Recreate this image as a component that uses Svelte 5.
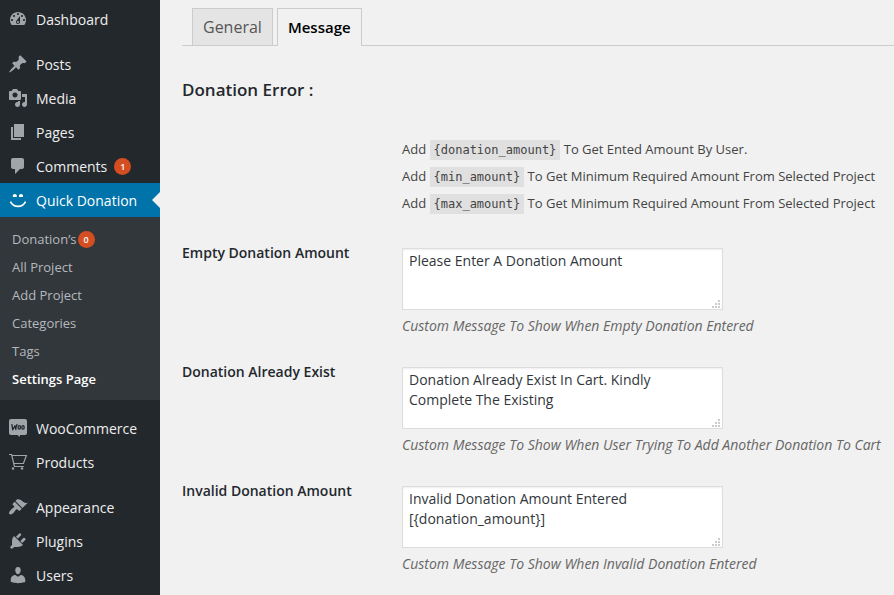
<script>
  const groups = [
    [{ name: 'Dashboard', icon: 'dashboard' }],
    [
      { name: 'Posts', icon: 'posts' },
      { name: 'Media', icon: 'media' },
      { name: 'Pages', icon: 'pages' },
      { name: 'Comments', icon: 'comments', count: 1 },
      {
        name: 'Quick Donation',
        icon: 'smiley',
        current: true,
        children: [
          { name: 'Donation’s', count: 0 },
          { name: 'All Project' },
          { name: 'Add Project' },
          { name: 'Categories' },
          { name: 'Tags' },
          { name: 'Settings Page', current: true }
        ]
      }
    ],
    [
      { name: 'WooCommerce', icon: 'woo' },
      { name: 'Products', icon: 'cart' }
    ],
    [
      { name: 'Appearance', icon: 'appearance' },
      { name: 'Plugins', icon: 'plugins' },
      { name: 'Users', icon: 'users' }
    ]
  ];

  const paths = {
    dashboard:
      'M3.76 16h12.48c1.1-1.37 1.76-3.11 1.76-5 0-4.42-3.58-8-8-8s-8 3.58-8 8c0 1.89.66 3.63 1.76 5zM10 4c.55 0 1 .45 1 1s-.45 1-1 1-1-.45-1-1 .45-1 1-1zM6 6c.55 0 1 .45 1 1s-.45 1-1 1-1-.45-1-1 .45-1 1-1zm8 0c.55 0 1 .45 1 1s-.45 1-1 1-1-.45-1-1 .45-1 1-1zm-5.37 5.55L12 7v6c0 1.1-.9 2-2 2s-2-.9-2-2c0-.57.24-1.08.63-1.45zM4 10c.55 0 1 .45 1 1s-.45 1-1 1-1-.45-1-1 .45-1 1-1zm12 0c.55 0 1 .45 1 1s-.45 1-1 1-1-.45-1-1 .45-1 1-1zm-5 3c0-.55-.45-1-1-1s-1 .45-1 1 .45 1 1 1 1-.45 1-1z',
    posts:
      'M10.44 3.02l1.82-1.82 6.36 6.35-1.83 1.82c-1.05-.68-2.48-.57-3.41.36l-.75.75c-.92.93-1.04 2.35-.35 3.41l-1.83 1.82-2.41-2.41-2.8 2.79c-.42.42-3.38 2.71-3.8 2.29s1.86-3.39 2.28-3.81l2.79-2.79L4.1 9.36l1.83-1.82c1.05.69 2.48.57 3.4-.36l.75-.75c.93-.92 1.05-2.35.36-3.41z',
    media:
      'M13 11V4c0-.55-.45-1-1-1h-1.67L9 1H5L3.67 3H2c-.55 0-1 .45-1 1v7c0 .55.45 1 1 1h10c.55 0 1-.45 1-1zM7 4.5c1.38 0 2.5 1.12 2.5 2.5S8.38 9.5 7 9.5 4.5 8.38 4.5 7 5.62 4.5 7 4.5zM14 6h5v10.5c0 1.38-1.12 2.5-2.5 2.5S14 17.88 14 16.5s1.12-2.5 2.5-2.5c.17 0 .34.02.5.05V9h-3V6zm-4 8.05V13h2v3.5c0 1.38-1.12 2.5-2.5 2.5S7 17.88 7 16.5 8.12 14 9.5 14c.17 0 .34.02.5.05z',
    pages: 'M6 15V2h10v13H6zm-1 1h8v2H3V5h2v11z',
    comments:
      'M5 2h9c1.1 0 2 .9 2 2v7c0 1.1-.9 2-2 2h-2l-5 5v-5H5c-1.1 0-2-.9-2-2V4c0-1.1.9-2 2-2z',
    appearance:
      'M14.48 11.06L7.41 3.99l1.5-1.5c.5-.56 2.3-.47 3.51.32 1.21.8 1.43 1.28 2.91 2.1 1.18.64 2.45 1.26 4.45.85zm-.71.71L6.7 4.7 4.93 6.47c-.39.39-.39 1.02 0 1.41l1.06 1.06c.39.39.39 1.03 0 1.42-.6.6-1.43 1.11-2.21 1.69-.35.26-.7.53-1.01.84C1.43 14.23.4 16.08 1.4 17.07c.99 1 2.84-.03 4.18-1.36.31-.31.58-.66.85-1.02.57-.78 1.08-1.61 1.69-2.21.39-.39 1.02-.39 1.41 0l1.06 1.06c.39.39 1.02.39 1.41 0z',
    plugins:
      'M13.11 4.36L9.87 7.6 8 5.73l3.24-3.24c.35-.34 1.05-.2 1.56.32.52.51.66 1.21.31 1.55zm-8 1.77l.91-1.12 9.01 9.01-1.19.84c-.71.71-2.63 1.16-3.82 1.16H6.14L4.9 17.26c-.59.59-1.54.59-2.12 0-.59-.58-.59-1.53 0-2.12l1.24-1.24v-3.88c0-1.13.4-3.19 1.09-3.89zm7.26 3.97l3.24-3.24c.34-.35 1.04-.21 1.55.31.52.51.66 1.21.31 1.55l-3.24 3.25z',
    users:
      'M10 9.25c-2.27 0-2.73-3.44-2.73-3.44C7 4.02 7.82 2 9.97 2c2.16 0 2.98 2.02 2.71 3.81 0 0-.41 3.44-2.68 3.44zm0 2.57L12.72 10c2.39 0 4.52 2.33 4.52 4.53v2.49s-3.65 1.13-7.24 1.13c-3.65 0-7.24-1.13-7.24-1.13v-2.49c0-2.25 1.94-4.48 4.47-4.48z'
  };

  const tags = [
    { code: '{donation_amount}', text: 'To Get Ented Amount By User.' },
    { code: '{min_amount}', text: 'To Get Minimum Required Amount From Selected Project' },
    { code: '{max_amount}', text: 'To Get Minimum Required Amount From Selected Project' }
  ];

  let fields = $state([
    {
      id: 'empty',
      label: 'Empty Donation Amount',
      value: 'Please Enter A Donation Amount',
      hint: 'Custom Message To Show When Empty Donation Entered'
    },
    {
      id: 'exist',
      label: 'Donation Already Exist',
      value: 'Donation Already Exist In Cart. Kindly Complete The Existing',
      hint: 'Custom Message To Show When User Trying To Add Another Donation To Cart'
    },
    {
      id: 'invalid',
      label: 'Invalid Donation Amount',
      value: 'Invalid Donation Amount Entered [{donation_amount}]',
      hint: 'Custom Message To Show When Invalid Donation Entered'
    }
  ]);
</script>

<div class="page">
  <nav class="menu">
    {#each groups as group}
      <ul class="group">
        {#each group as item}
          <li>
            <a class="item" class:current={item.current} href="#{item.icon}">
              <svg class="icon" viewBox="0 0 20 20" aria-hidden="true">
                {#if item.icon === 'smiley'}
                  <path d="M4.8 7V5.6q0-1.6 2-1.6t2 1.6V7zM11 7V5.6q0-1.6 2-1.6t2 1.6V7z" />
                  <path d="M2.4 11.6c3.4 6.4 11.8 6.4 15.2 0" fill="none" stroke="currentColor" stroke-width="1.7" />
                {:else if item.icon === 'woo'}
                  <path d="M3 1h14q2 0 2 2v12q0 2-2 2h-5l-.5 2-2-2H3q-2 0-2-2V3q0-2 2-2z" />
                  <g fill="none" stroke="#23282d" stroke-width="1.3" stroke-linejoin="round">
                    <path d="M3.8 6.2l1 5.6 2.2-4 .8 3.6q.3-3.4 1.4-5.2" />
                    <ellipse cx="11.3" cy="9.4" rx="1.2" ry="1.8" />
                    <ellipse cx="15" cy="9.4" rx="1.2" ry="1.8" />
                  </g>
                {:else if item.icon === 'cart'}
                  <g fill="none" stroke="currentColor" stroke-width="1.2">
                    <path d="M1 2.5h2.6L6.4 14.5h9.4M4 3.5h14.4l-3 8H5.8" />
                  </g>
                  <circle cx="5" cy="16.5" r="1.2" />
                  <circle cx="14" cy="16.5" r="1.2" />
                {:else}
                  <path fill-rule="evenodd" d={paths[item.icon]} />
                {/if}
              </svg>
              <span class="name">{item.name}</span>
              {#if item.count !== undefined}<span class="badge">{item.count}</span>{/if}
            </a>
            {#if item.children}
              <ul class="submenu">
                {#each item.children as sub}
                  <li>
                    <a class="sub" class:active={sub.current} href="#{sub.name}">
                      {sub.name}{#if sub.count !== undefined}<span class="badge">{sub.count}</span>{/if}
                    </a>
                  </li>
                {/each}
              </ul>
            {/if}
          </li>
        {/each}
      </ul>
    {/each}
  </nav>

  <main>
    <div class="tabs">
      <a class="tab" href="#general">General</a>
      <a class="tab selected" href="#message" aria-current="page">Message</a>
    </div>

    <h3>Donation Error :</h3>

    <div class="legend">
      {#each tags as tag}
        <p>Add <code>{tag.code}</code> {tag.text}</p>
      {/each}
    </div>

    <form>
      {#each fields as field}
        <div class="row">
          <label for={field.id}>{field.label}</label>
          <div class="control">
            <div class="box">
              <textarea id={field.id} bind:value={field.value} aria-describedby="{field.id}-hint"></textarea>
              <svg class="grip" viewBox="0 0 8 8" aria-hidden="true">
                <path d="M6 0h2v2H6zM3 3h2v2H3zM6 3h2v2H6zM0 6h2v2H0zM3 6h2v2H3zM6 6h2v2H6z" />
              </svg>
            </div>
            <p class="hint" id="{field.id}-hint">{field.hint}</p>
          </div>
        </div>
      {/each}
    </form>
  </main>
</div>

<style>
  :global(body) {
    margin: 0;
    background: #f1f1f1;
  }
  .page {
    display: flex;
    min-height: 100vh;
    font: 14px/20px 'Open Sans', sans-serif;
    color: #444;
  }
  .page * {
    box-sizing: border-box;
  }
  a {
    text-decoration: none;
  }
  ul {
    list-style: none;
    margin: 0;
    padding: 0;
  }

  .menu {
    flex: 0 0 160px;
    display: flex;
    flex-direction: column;
    gap: 11px;
    padding-top: 2px;
    background: #23282d;
  }
  .item {
    position: relative;
    display: flex;
    align-items: center;
    height: 34px;
    padding-left: 8px;
    color: #eee;
  }
  .name {
    padding-top: 2px;
  }
  .icon {
    width: 20px;
    height: 20px;
    margin-right: 8px;
    color: #a0a5aa;
    fill: currentColor;
  }
  .item.current,
  .item.current .icon {
    color: #fff;
  }
  .item.current {
    background: #0073aa;
  }
  .item.current::after {
    content: '';
    position: absolute;
    right: 0;
    top: 9px;
    border: 8px solid transparent;
    border-left: 0;
    border-right-color: #f1f1f1;
  }
  .badge {
    display: inline-block;
    width: 17px;
    height: 17px;
    border-radius: 50%;
    background: #d54e21;
    color: #fff;
    font-size: 9px;
    font-weight: 600;
    line-height: 17px;
    text-align: center;
  }
  .item .badge {
    margin-left: 7px;
  }
  .submenu {
    padding: 8px 0 7px;
    background: #32373c;
  }
  .sub {
    display: flex;
    align-items: center;
    height: 28px;
    padding-left: 12px;
    font-size: 13px;
    color: #b4b9be;
  }
  .sub .badge {
    margin-left: 1px;
  }
  .sub.active {
    color: #fff;
    font-weight: 600;
  }

  main {
    flex: 1;
    min-width: 0;
    padding: 8px 0 0 22px;
  }
  .tabs {
    display: flex;
    gap: 4px;
    padding-left: 10px;
    border-bottom: 1px solid #ccc;
  }
  .tab {
    height: 37px;
    padding: 0 10px;
    border: 1px solid #ccc;
    border-bottom: 0;
    background: #e4e4e4;
    color: #555;
    font-size: 16px;
    line-height: 37px;
  }
  .tab.selected {
    height: 38px;
    margin-bottom: -1px;
    background: #f1f1f1;
    color: #000;
    font-size: 15px;
    font-weight: 600;
  }
  h3 {
    margin: 32px 0 0;
    color: #23282d;
    font-size: 17px;
    font-weight: 600;
    line-height: 24px;
  }
  .legend {
    padding: 34px 0 0 220px;
    font-size: 13px;
  }
  .legend p {
    margin: 0;
    line-height: 27px;
    white-space: nowrap;
  }
  code {
    padding: 3px 4px;
    background: #e0e0e0;
    font: 12px 'DejaVu Sans Mono', monospace;
  }
  form {
    display: flex;
    flex-direction: column;
    gap: 31px;
    padding-top: 31px;
  }
  .row {
    display: flex;
    align-items: flex-start;
  }
  label {
    flex: 0 0 220px;
    margin-top: -5px;
    color: #23282d;
    font-weight: 600;
  }
  .control {
    flex: 1;
    min-width: 0;
  }
  .box {
    position: relative;
    max-width: 321px;
  }
  textarea {
    display: block;
    width: 100%;
    height: 62px;
    padding: 2px 6px;
    border: 1px solid #ddd;
    background: #fff;
    box-shadow: inset 0 1px 2px rgba(0, 0, 0, 0.07);
    color: #32373c;
    font: 14px/20px 'Open Sans', sans-serif;
    resize: none;
    overflow: hidden;
  }
  .grip {
    position: absolute;
    right: 3px;
    bottom: 2px;
    width: 8px;
    height: 8px;
    fill: #ccc;
    pointer-events: none;
  }
  .hint {
    margin: 6px 0 0;
    color: #666;
    font-style: italic;
    white-space: nowrap;
  }
</style>
